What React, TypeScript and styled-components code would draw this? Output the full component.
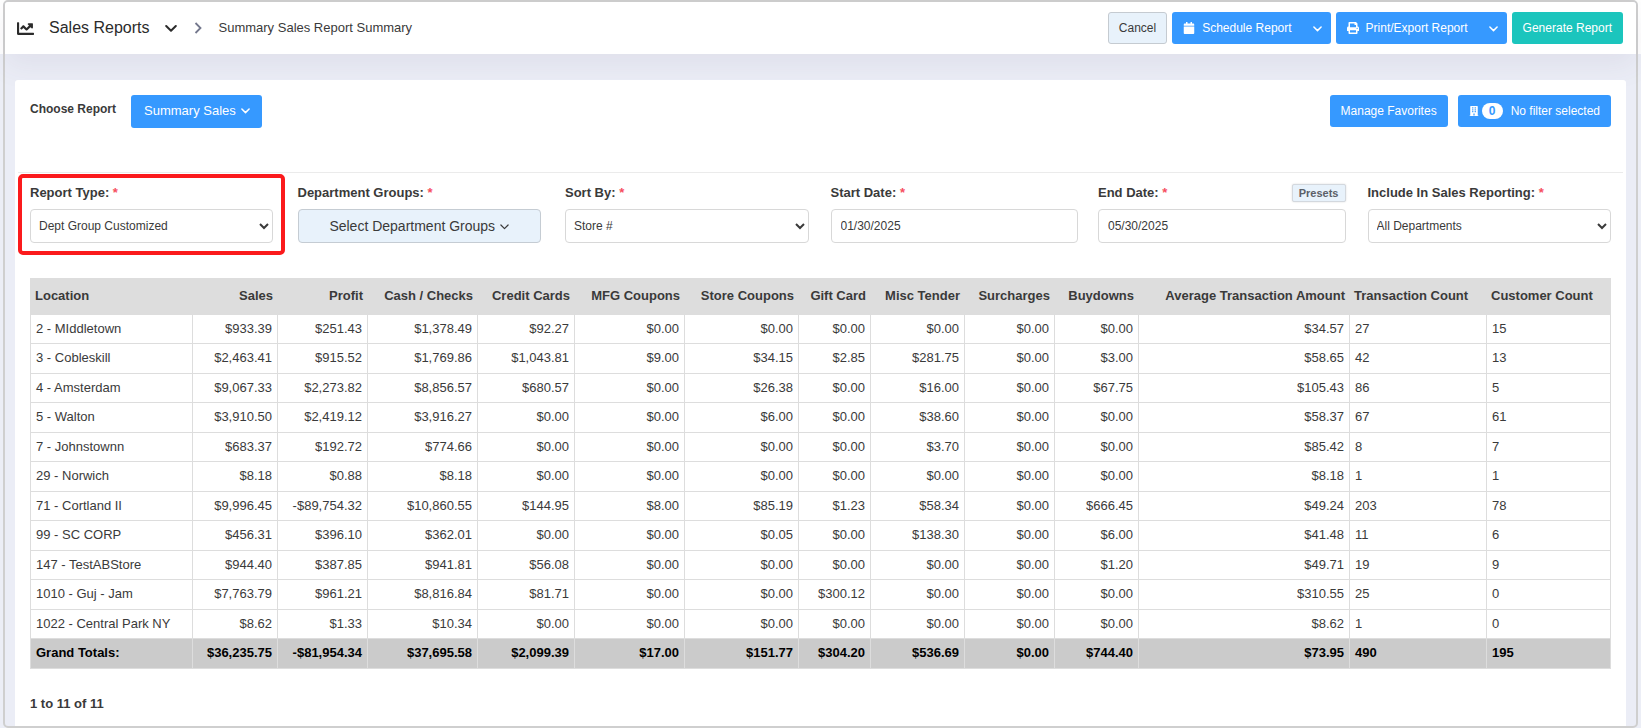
import React from 'react';
import styled, { createGlobalStyle, css } from 'styled-components';
import { FaBuilding, FaCalendar, FaChartLine, FaPrint } from 'react-icons/fa';

const GlobalStyle = createGlobalStyle`
  *, *::before, *::after { box-sizing: border-box; }
  body {
    margin: 0;
    background: #eceef6;
    color: #3a3a3a;
    font: 13px/1.5 "Liberation Sans", Arial, sans-serif;
  }
  button, input, select { font-family: inherit; color: inherit; }
`;

const Page = styled.div`
  display: flex;
  min-height: 100vh;
  padding: 0 3px;
  background: linear-gradient(#fff 54px, #eceef6 54px);
`;

const Frame = styled.div`
  display: flex;
  flex: 1;
  flex-direction: column;
  min-width: 0;
  border: 2px solid #cfcfcf;
  border-radius: 5px;
  background: #ebedf6;
`;

const Header = styled.header`
  display: flex;
  align-items: center;
  gap: 15px;
  height: 52px;
  padding: 0 13px 0 12px;
  border-radius: 3px 3px 0 0;
  background: #fff;
  box-shadow: 0 10px 30px 0 rgba(82, 63, 105, 0.08);
`;

const TitleButton = styled.button`
  display: flex;
  align-items: center;
  gap: 15px;
  padding: 0;
  border: 0;
  background: none;
  color: #2b2b2b;
  font-size: 16px;
`;

const Crumb = styled.span`
  flex: 1;
`;

const Actions = styled.div`
  display: flex;
  gap: 5px;
`;

const Button = styled.button<{ $tone?: 'light' | 'teal' }>`
  display: flex;
  align-items: center;
  height: 32px;
  padding: 0 11px;
  border: 0;
  border-radius: 3px;
  background: #3699ff;
  color: #fff;
  font-size: 12px;
  white-space: nowrap;
  ${({ $tone }) =>
    $tone === 'light' &&
    css`
      padding: 0 10px;
      border: 1px solid #c5cbd1;
      background: #e8f2fb;
      color: #3a3a3a;
    `}
  ${({ $tone }) => $tone === 'teal' && 'background: #1bc5bd;'}
`;

const SplitButton = styled.div`
  display: flex;

  & > :first-child {
    gap: 7px;
    padding-right: 10px;
    border-radius: 3px 0 0 3px;
  }
  & > :last-child {
    padding: 0 9px 0 11px;
    border-radius: 0 3px 3px 0;
  }
`;

const Panel = styled.main`
  flex: 1;
  margin: 26px 10px 0;
  padding: 15px 15px 12px;
  border-radius: 3px 3px 0 0;
  background: #fff;
`;

const ReportBar = styled.div`
  display: flex;
  align-items: flex-start;
  gap: 10px;
  height: 77px;
`;

const ReportLabel = styled.label`
  padding-right: 5px;
  font-size: 12px;
  font-weight: bold;
  line-height: 28px;
`;

const ReportButton = styled(Button)`
  gap: 5px;
  height: 33px;
  margin-right: auto;
  padding: 0 12px 2px 13px;
  font-size: 13px;
`;

const Badge = styled.span`
  min-width: 21px;
  margin: 0 8px 0 3px;
  border-radius: 8px;
  background: #fff;
  color: #3699ff;
  font-weight: bold;
  line-height: 16px;
  text-align: center;
`;

const Filters = styled.form`
  display: grid;
  grid-template-columns: repeat(6, 1fr);
  margin: 0 -12px 23px;
  border-top: 1px solid #ebebeb;
`;

const Field = styled.div<{ $wide?: boolean; $marked?: boolean }>`
  display: flex;
  flex-direction: column;
  gap: 7px;
  margin-top: 1px;
  padding: ${({ $wide }) => ($wide ? '10px 10px 12px' : '10px 12px 12px')};
  ${({ $marked }) =>
    $marked &&
    css`
      margin-right: 1px;
      padding: 6px 8px 8px;
      border: 4px solid #fb1a1c;
      border-radius: 5px;
    `}
`;

const FieldHead = styled.div`
  display: flex;
  align-items: center;
  justify-content: space-between;
  height: 18px;
  font-weight: bold;
`;

const Required = styled.span`
  color: #f64e60;
`;

const Presets = styled.button`
  height: 18px;
  padding: 0 6px;
  border: 1px solid #d3d8de;
  border-radius: 2px;
  background: #e8f2fb;
  box-shadow: 0 0 2px rgba(0, 0, 0, 0.15);
  color: #5b6068;
  font-size: 11px;
  font-weight: bold;
`;

const control = css`
  width: 100%;
  height: 34px;
  border: 1px solid #d8d8d8;
  border-radius: 4px;
  background: #fff;
  font-size: 12px;
`;

const TextBox = styled.input`
  ${control}
  padding: 0 9px;
`;

const Select = styled.select`
  ${control}
  padding: 0 4px;
`;

const GroupButton = styled.button`
  ${control}
  display: flex;
  align-items: center;
  justify-content: center;
  gap: 5px;
  border-color: #c5ccd3;
  background: #e8f2fb;
  font-size: 14px;
`;

const Table = styled.table`
  width: 100%;
  table-layout: fixed;
  border-collapse: collapse;
`;

const Col = styled.col<{ $w: number }>`
  width: ${({ $w }) => $w}px;
`;

const HeadCell = styled.th<{ $right?: boolean }>`
  padding: 7px 4px 8px;
  border: 1px solid #ddd;
  background: #ddd;
  text-align: ${({ $right }) => ($right ? 'right' : 'left')};
  white-space: nowrap;
`;

const Cell = styled.td<{ $right?: boolean; $total?: boolean }>`
  padding: 4px 5px 5px;
  border: 1px solid #ddd;
  text-align: ${({ $right }) => ($right ? 'right' : 'left')};
  white-space: nowrap;
  ${({ $total }) => $total && 'background: #cbcbcb; color: #000; font-weight: bold;'}
`;

const Pager = styled.p`
  margin: 25px 0 0;
  font-weight: bold;
`;

const Chevron = ({ size = 8, width = 2 }: { size?: number; width?: number }) => (
  <svg width={size} height={size} viewBox="0 0 12 12" fill="none" stroke="currentColor" strokeWidth={width} strokeLinecap="round" strokeLinejoin="round" aria-hidden="true">
    <path d="M1.2 4 6 8.800l4.800-4.800" />
  </svg>
);

const ChevronRight = () => (
  <svg width="12" height="12" viewBox="0 0 12 12" fill="none" stroke="#74788d" strokeWidth="1.8" aria-hidden="true">
    <path d="M3.5 1 8.5 6l-5 5" />
  </svg>
);

const columns = [
  { name: 'Location', w: 162, right: false },
  { name: 'Sales', w: 85, right: true },
  { name: 'Profit', w: 90, right: true },
  { name: 'Cash / Checks', w: 110, right: true },
  { name: 'Credit Cards', w: 97, right: true },
  { name: 'MFG Coupons', w: 110, right: true },
  { name: 'Store Coupons', w: 114, right: true },
  { name: 'Gift Card', w: 72, right: true },
  { name: 'Misc Tender', w: 94, right: true },
  { name: 'Surcharges', w: 90, right: true },
  { name: 'Buydowns', w: 84, right: true },
  { name: 'Average Transaction Amount', w: 211, right: true },
  { name: 'Transaction Count', w: 137, right: false },
  { name: 'Customer Count', w: 124, right: false },
];

const rows = [
  ['2 - MIddletown', '$933.39', '$251.43', '$1,378.49', '$92.27', '$0.00', '$0.00', '$0.00', '$0.00', '$0.00', '$0.00', '$34.57', '27', '15'],
  ['3 - Cobleskill', '$2,463.41', '$915.52', '$1,769.86', '$1,043.81', '$9.00', '$34.15', '$2.85', '$281.75', '$0.00', '$3.00', '$58.65', '42', '13'],
  ['4 - Amsterdam', '$9,067.33', '$2,273.82', '$8,856.57', '$680.57', '$0.00', '$26.38', '$0.00', '$16.00', '$0.00', '$67.75', '$105.43', '86', '5'],
  ['5 - Walton', '$3,910.50', '$2,419.12', '$3,916.27', '$0.00', '$0.00', '$6.00', '$0.00', '$38.60', '$0.00', '$0.00', '$58.37', '67', '61'],
  ['7 - Johnstownn', '$683.37', '$192.72', '$774.66', '$0.00', '$0.00', '$0.00', '$0.00', '$3.70', '$0.00', '$0.00', '$85.42', '8', '7'],
  ['29 - Norwich', '$8.18', '$0.88', '$8.18', '$0.00', '$0.00', '$0.00', '$0.00', '$0.00', '$0.00', '$0.00', '$8.18', '1', '1'],
  ['71 - Cortland II', '$9,996.45', '-$89,754.32', '$10,860.55', '$144.95', '$8.00', '$85.19', '$1.23', '$58.34', '$0.00', '$666.45', '$49.24', '203', '78'],
  ['99 - SC CORP', '$456.31', '$396.10', '$362.01', '$0.00', '$0.00', '$0.05', '$0.00', '$138.30', '$0.00', '$6.00', '$41.48', '11', '6'],
  ['147 - TestABStore', '$944.40', '$387.85', '$941.81', '$56.08', '$0.00', '$0.00', '$0.00', '$0.00', '$0.00', '$1.20', '$49.71', '19', '9'],
  ['1010 - Guj - Jam', '$7,763.79', '$961.21', '$8,816.84', '$81.71', '$0.00', '$0.00', '$300.12', '$0.00', '$0.00', '$0.00', '$310.55', '25', '0'],
  ['1022 - Central Park NY', '$8.62', '$1.33', '$10.34', '$0.00', '$0.00', '$0.00', '$0.00', '$0.00', '$0.00', '$0.00', '$8.62', '1', '0'],
];

const totals = ['Grand Totals:', '$36,235.75', '-$81,954.34', '$37,695.58', '$2,099.39', '$17.00', '$151.77', '$304.20', '$536.69', '$0.00', '$744.40', '$73.95', '490', '195'];

const FieldLabel = ({ htmlFor, children }: { htmlFor: string; children: React.ReactNode }) => (
  <label htmlFor={htmlFor}>
    {children} <Required>*</Required>
  </label>
);

export default function App() {
  return (
    <Page>
      <GlobalStyle />
      <Frame>
        <Header>
          <TitleButton type="button">
            <FaChartLine size={17} />
            Sales Reports
            <Chevron size={12} />
          </TitleButton>
          <ChevronRight />
          <Crumb>Summary Sales Report Summary</Crumb>
          <Actions>
            <Button type="button" $tone="light">Cancel</Button>
            <SplitButton>
              <Button type="button"><FaCalendar size={12} />Schedule Report</Button>
              <Button type="button" aria-label="Schedule options"><Chevron size={9} /></Button>
            </SplitButton>
            <SplitButton>
              <Button type="button"><FaPrint size={12} />Print/Export Report</Button>
              <Button type="button" aria-label="Print and export options"><Chevron size={9} /></Button>
            </SplitButton>
            <Button type="button" $tone="teal">Generate Report</Button>
          </Actions>
        </Header>

        <Panel>
          <ReportBar>
            <ReportLabel htmlFor="report">Choose Report</ReportLabel>
            <ReportButton type="button" id="report">
              Summary Sales <Chevron size={9} />
            </ReportButton>
            <Button type="button">Manage Favorites</Button>
            <Button type="button"><FaBuilding size={10} /><Badge>0</Badge>No filter selected</Button>
          </ReportBar>

          <Filters>
            <Field $marked>
              <FieldHead><FieldLabel htmlFor="type">Report Type:</FieldLabel></FieldHead>
              <Select id="type"><option>Dept Group Customized</option></Select>
            </Field>
            <Field>
              <FieldHead><FieldLabel htmlFor="groups">Department Groups:</FieldLabel></FieldHead>
              <GroupButton type="button" id="groups">
                Select Department Groups <Chevron size={9} width={1.6} />
              </GroupButton>
            </Field>
            <Field>
              <FieldHead><FieldLabel htmlFor="sort">Sort By:</FieldLabel></FieldHead>
              <Select id="sort"><option>Store #</option></Select>
            </Field>
            <Field $wide>
              <FieldHead><FieldLabel htmlFor="start">Start Date:</FieldLabel></FieldHead>
              <TextBox id="start" defaultValue="01/30/2025" />
            </Field>
            <Field $wide>
              <FieldHead>
                <FieldLabel htmlFor="end">End Date:</FieldLabel>
                <Presets type="button">Presets</Presets>
              </FieldHead>
              <TextBox id="end" defaultValue="05/30/2025" />
            </Field>
            <Field>
              <FieldHead><FieldLabel htmlFor="include">Include In Sales Reporting:</FieldLabel></FieldHead>
              <Select id="include"><option>All Departments</option></Select>
            </Field>
          </Filters>

          <Table>
            <colgroup>
              {columns.map((c) => <Col key={c.name} $w={c.w} />)}
            </colgroup>
            <thead>
              <tr>
                {columns.map((c) => <HeadCell key={c.name} scope="col" $right={c.right}>{c.name}</HeadCell>)}
              </tr>
            </thead>
            <tbody>
              {rows.map((row) => (
                <tr key={row[0]}>
                  {row.map((value, i) => <Cell key={columns[i].name} $right={columns[i].right}>{value}</Cell>)}
                </tr>
              ))}
            </tbody>
            <tfoot>
              <tr>
                {totals.map((value, i) => <Cell key={columns[i].name} $right={columns[i].right} $total>{value}</Cell>)}
              </tr>
            </tfoot>
          </Table>
          <Pager>1 to 11 of 11</Pager>
        </Panel>
      </Frame>
    </Page>
  );
}
